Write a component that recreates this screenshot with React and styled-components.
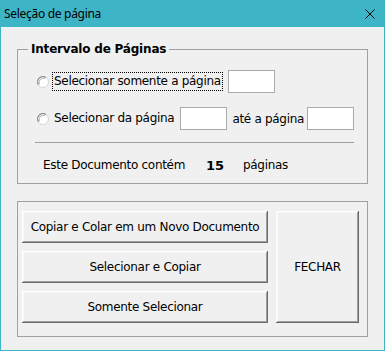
import React, { useState } from "react";
import styled, { createGlobalStyle } from "styled-components";

const GlobalStyle = createGlobalStyle`
  html, body {
    margin: 0;
    padding: 0;
    background: #ffffff;
  }
  * {
    box-sizing: border-box;
  }
`;

const Window = styled.div`
  width: 385px;
  height: 351px;
  display: flex;
  flex-direction: column;
  background: #f0f0f0;
  border: 1px solid #3db5c7;
  border-top: none;
  font-family: "DejaVu Sans", Tahoma, sans-serif;
  font-size: 12px;
  letter-spacing: -0.3px;
  color: #000;
`;

const TitleBar = styled.div`
  height: 27px;
  margin: 0 -1px;
  padding: 0 10px 0 4px;
  display: flex;
  align-items: center;
  justify-content: space-between;
  background: #3db5c7;
  font-family: "Noto Sans", "Open Sans", sans-serif;
  font-size: 12px;
  letter-spacing: -0.3px;
  color: #000;
`;

const CloseIcon = () => (
  <svg width="10" height="10" viewBox="0 0 10 10">
    <path d="M0.5 0.5 L9.5 9.5 M9.5 0.5 L0.5 9.5" stroke="#000" strokeWidth="1" />
  </svg>
);

const Body = styled.div`
  flex: 1;
  display: flex;
  flex-direction: column;
  padding: 13px 16px 0 16px;
`;

const Frame = styled.fieldset`
  margin: 0;
  min-width: 0;
  border: 1px solid #a0a0a0;
  padding: ${(p) => p.$pad};
  margin-top: ${(p) => p.$top || 0}px;
`;

const Legend = styled.legend`
  margin-left: 10px;
  padding: 0 3px;
  line-height: 18px;
  font-weight: bold;
  font-size: 12px;
  letter-spacing: -0.2px;
`;

const OptionRow = styled.div`
  display: flex;
  align-items: center;
  height: 23px;
  padding-left: 19px;
  margin-top: ${(p) => p.$top || 0}px;
`;

const RadioIcon = () => (
  <svg width="12" height="12" viewBox="0 0 12 12" style={{ flex: "none" }}>
    <circle cx="6" cy="6" r="5.5" fill="#fff" stroke="#d4d4d4" />
    <path d="M1.3 8.9 A5.5 5.5 0 0 1 8.9 1.3" fill="none" stroke="#7a7a7a" />
    <path d="M2.4 8 A4.3 4.3 0 0 1 8 2.4" fill="none" stroke="#a8a8a8" />
  </svg>
);

const OptionLabel = styled.label`
  margin-left: 3px;
  padding: 1px 1px 2px 1px;
  border: 1px dotted ${(p) => (p.$focused ? "#000" : "transparent")};
  white-space: nowrap;
`;

const Text = styled.span`
  margin: 0 ${(p) => p.$right || 0}px 0 ${(p) => p.$left || 0}px;
  white-space: nowrap;
`;

const TextBox = styled.input`
  width: 47px;
  height: 23px;
  margin-left: ${(p) => p.$left || 0}px;
  border: 1px solid #ababab;
  background: #fff;
  padding: 0 3px;
  font: inherit;
  outline: none;
`;

const Separator = styled.div`
  height: 1px;
  width: 319px;
  margin: 12px 0 0 17px;
  background: #a0a0a0;
`;

const InfoRow = styled.div`
  display: grid;
  grid-template-columns: 163px 37px auto;
  align-items: center;
  height: 16px;
  margin-top: 14px;
  padding-left: 25px;
`;

const Count = styled.span`
  font-weight: bold;
  font-size: 13px;
  letter-spacing: 0;
`;

const ButtonGrid = styled.div`
  display: grid;
  grid-template-columns: 246px 83px;
  grid-template-rows: repeat(3, 32px);
  gap: 8px;
`;

const Button = styled.button`
  grid-column: ${(p) => (p.$tall ? "2" : "1")};
  grid-row: ${(p) => (p.$tall ? "1 / span 3" : "auto")};
  margin: 0;
  padding: 0;
  border: none;
  background: #f0f0f0;
  box-shadow: inset -1px -1px 0 #696969, inset 1px 1px 0 #ffffff,
    inset -2px -2px 0 #a0a0a0, inset 2px 2px 0 #f8f8f8;
  font: inherit;
  letter-spacing: -0.3px;
  color: #000;
  cursor: pointer;
`;

export default function App() {
  const [single, setSingle] = useState("");
  const [from, setFrom] = useState("");
  const [to, setTo] = useState("");

  return (
    <>
      <GlobalStyle />
      <Window>
        <TitleBar>
          <span>Seleção de página</span>
          <CloseIcon />
        </TitleBar>
        <Body>
          <Frame $pad="12px 0 10px 0">
            <Legend>Intervalo de Páginas</Legend>
            <OptionRow>
              <RadioIcon />
              <OptionLabel $focused>Selecionar somente a página</OptionLabel>
              <TextBox $left={5} value={single} onChange={(e) => setSingle(e.target.value)} />
            </OptionRow>
            <OptionRow $top={14}>
              <RadioIcon />
              <OptionLabel>Selecionar da página</OptionLabel>
              <TextBox $left={4} value={from} onChange={(e) => setFrom(e.target.value)} />
              <Text $left={5} $right={3}>até a página</Text>
              <TextBox value={to} onChange={(e) => setTo(e.target.value)} />
            </OptionRow>
            <Separator />
            <InfoRow>
              <span>Este Documento contém</span>
              <Count>15</Count>
              <span>páginas</span>
            </InfoRow>
          </Frame>
          <Frame $pad="9px 0 13px 4px" $top={17}>
            <ButtonGrid>
              <Button>Copiar e Colar em um Novo Documento</Button>
              <Button $tall>FECHAR</Button>
              <Button>Selecionar e Copiar</Button>
              <Button>Somente Selecionar</Button>
            </ButtonGrid>
          </Frame>
        </Body>
      </Window>
    </>
  );
}
